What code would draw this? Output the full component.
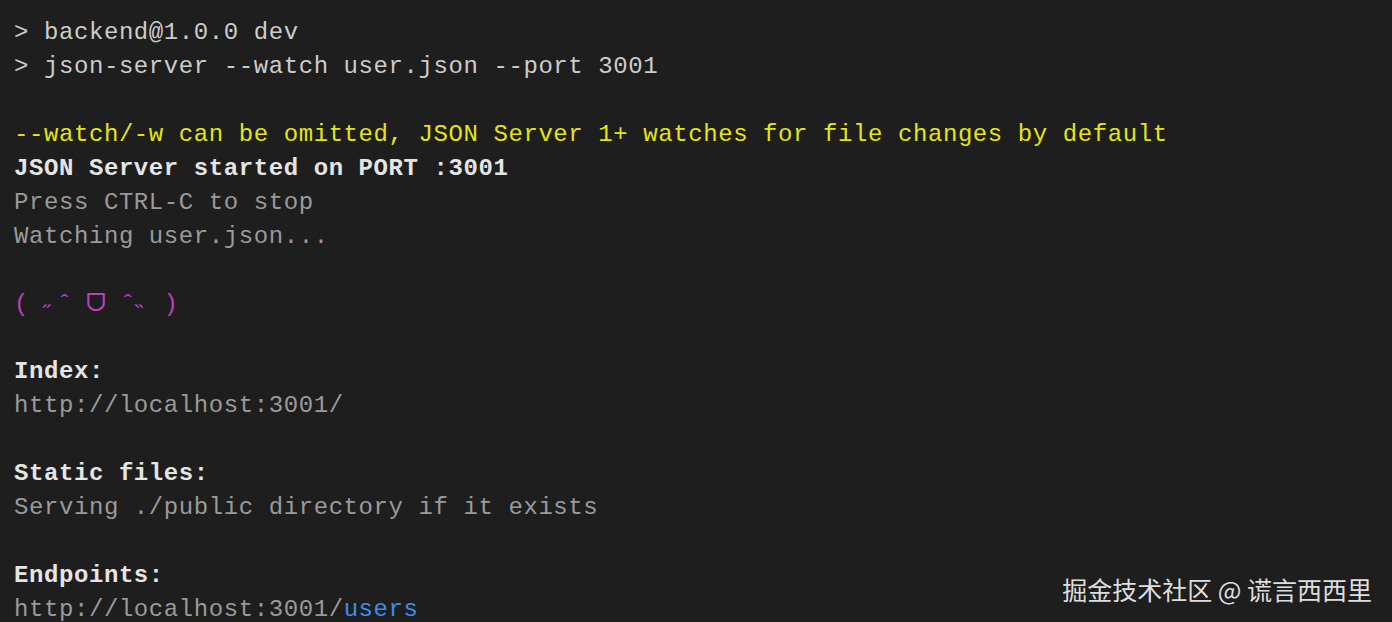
import React from "react";

const mono = { fontFamily: '"Liberation Mono", "DejaVu Sans Mono", monospace' };

export default function App() {
  return (
    <div className="relative w-[1392px] h-[622px] overflow-hidden bg-[#1e1e1e]">
      <div
        className="pl-[14px] pt-[16px] text-[24px] leading-[33.94px] tracking-[0.58px] whitespace-pre text-[#cccccc]"
        style={mono}
      >
        <div>&gt; backend@1.0.0 dev</div>
        <div>&gt; json-server --watch user.json --port 3001</div>
        <div>&nbsp;</div>
        <div className="text-[#e5e510]">--watch/-w can be omitted, JSON Server 1+ watches for file changes by default</div>
        <div className="font-bold text-[#e5e5e5]">JSON Server started on PORT :3001</div>
        <div className="text-[#9a9a9a]">Press CTRL-C to stop</div>
        <div className="text-[#9a9a9a]">Watching user.json...</div>
        <div>&nbsp;</div>
        <div className="text-[#bc3fbc] tracking-[0px]">( ˶ˆ ᗜ ˆ˵ )</div>
        <div>&nbsp;</div>
        <div className="font-bold text-[#e5e5e5]">Index:</div>
        <div className="text-[#9a9a9a]">http://localhost:3001/</div>
        <div>&nbsp;</div>
        <div className="font-bold text-[#e5e5e5]">Static files:</div>
        <div className="text-[#9a9a9a]">Serving ./public directory if it exists</div>
        <div>&nbsp;</div>
        <div className="font-bold text-[#e5e5e5]">Endpoints:</div>
        <div className="text-[#9a9a9a]">
          http://localhost:3001/<span className="text-[#3b8eea]">users</span>
        </div>
      </div>
      <div
        className="absolute right-[20px] top-[571px] text-[25px] leading-[36px] text-[#dedede] whitespace-nowrap"
        style={{ fontFamily: '"Noto Sans CJK SC", "Noto Sans", sans-serif' }}
      >
        掘金技术社区 @ 谎言西西里
      </div>
    </div>
  );
}
